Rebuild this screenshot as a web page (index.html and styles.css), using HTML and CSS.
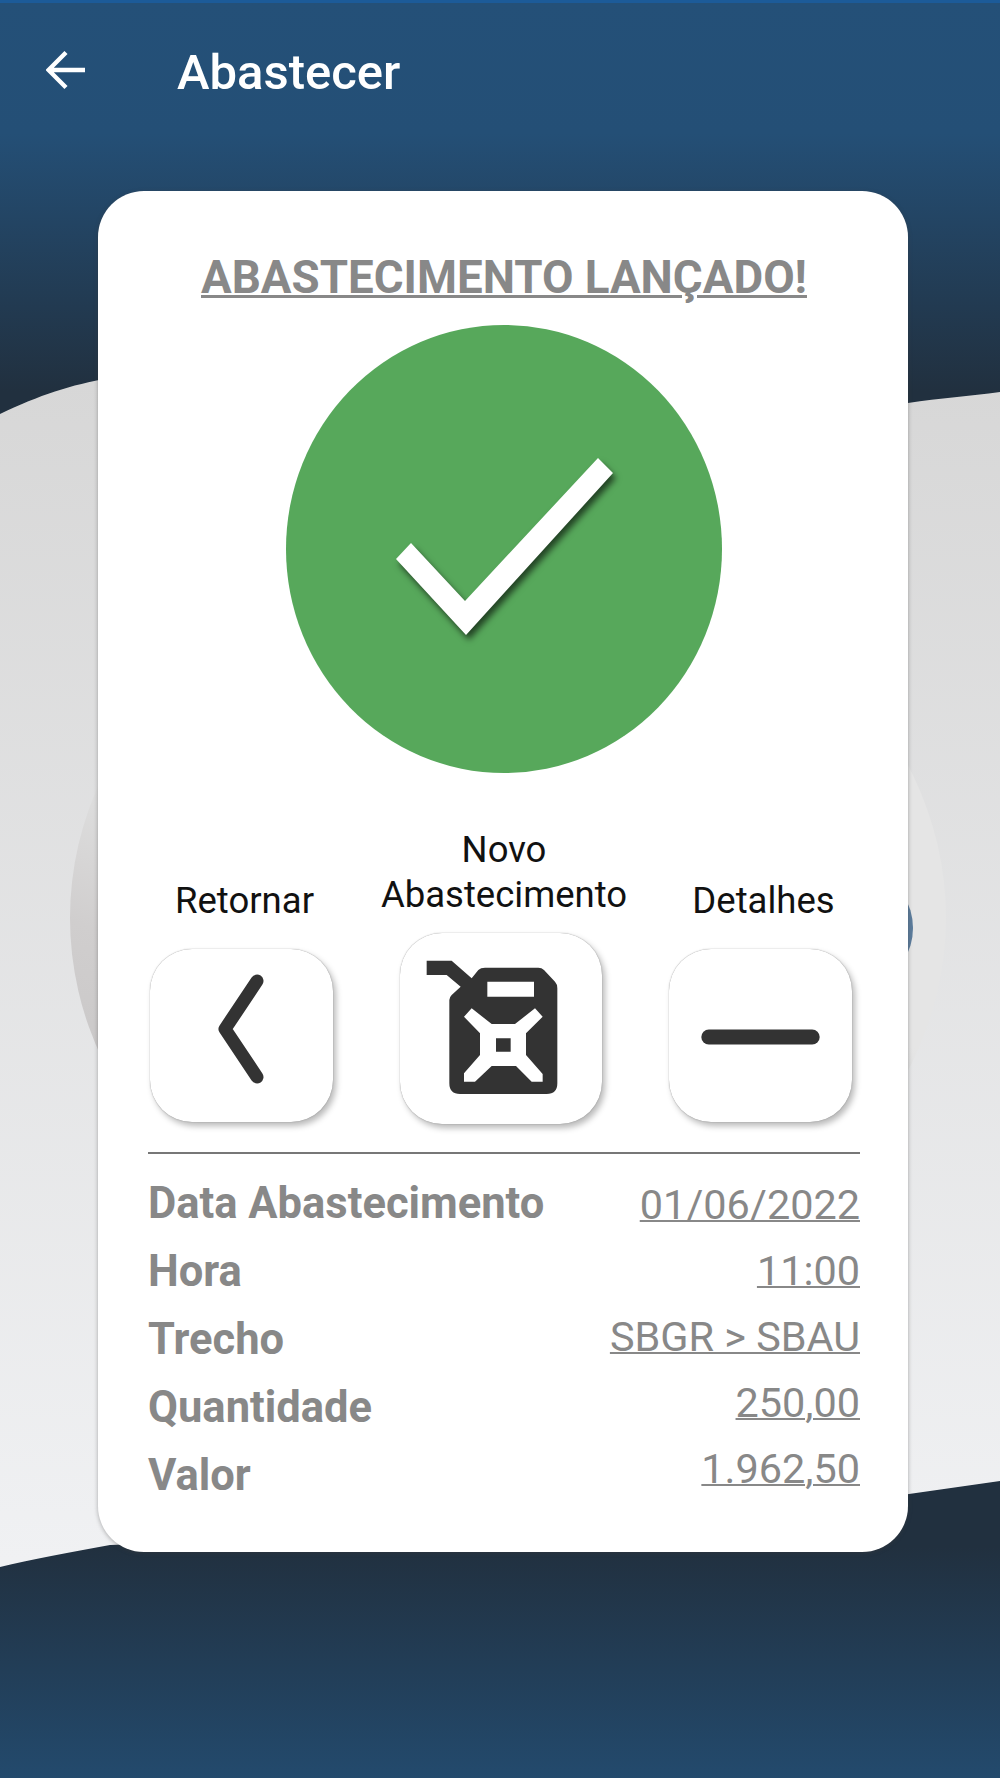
FILE: index.html
```html
<!DOCTYPE html>
<html lang="pt">
<head>
<meta charset="utf-8">
<title>Abastecer</title>
<link rel="stylesheet" href="styles.css">
</head>
<body>
<div class="screen">
  <svg class="backdrop" viewBox="0 0 1000 1778" preserveAspectRatio="none" aria-hidden="true">
    <defs>
      <linearGradient id="sky" x1="0" y1="0" x2="0" y2="1">
        <stop offset="0" stop-color="#245078"/>
        <stop offset="0.075" stop-color="#244f76"/>
        <stop offset="0.22" stop-color="#21303f"/>
        <stop offset="0.87" stop-color="#21303f"/>
        <stop offset="1" stop-color="#234a6d"/>
      </linearGradient>
      <linearGradient id="wave" x1="0" y1="380" x2="0" y2="1560" gradientUnits="userSpaceOnUse">
        <stop offset="0" stop-color="#d7d7d7"/>
        <stop offset="1" stop-color="#f0f1f3"/>
      </linearGradient>
      <linearGradient id="disc" x1="0" y1="0.9" x2="0.35" y2="0.1">
        <stop offset="0.25" stop-color="#cbc9c9"/>
        <stop offset="0.417" stop-color="#d0cece"/>
        <stop offset="0.6" stop-color="#dddddd"/>
        <stop offset="0.68" stop-color="#e5e5e5"/>
      </linearGradient>
    </defs>
    <rect width="1000" height="1778" fill="url(#sky)"/>
    <rect width="1000" height="3" fill="#1c5b99"/>
    <path d="M0 414 C40 395 70 385 110 378 L908 403 C940 398 970 396 1000 392 V1481 C900 1495 800 1510 700 1525 L110 1545 C70 1552 30 1560 0 1567 Z" fill="url(#wave)"/>
    <ellipse cx="508" cy="918" rx="438" ry="375" fill="url(#disc)"/>
    <ellipse cx="880" cy="928" rx="33" ry="46" fill="#5b7c9c"/>
  </svg>

  <header class="topbar">
    <svg class="back" viewBox="0 0 40 40" aria-hidden="true">
      <path d="M39 20H3M20 2.5 2.5 20 20 37.5" fill="none" stroke="#fff" stroke-width="4.4"/>
    </svg>
    <h1 class="page-title">Abastecer</h1>
  </header>

  <main class="card">
    <h2 class="card-title">ABASTECIMENTO LANÇADO!</h2>

    <svg class="success" viewBox="286 325 436 448" aria-hidden="true">
      <ellipse cx="504" cy="549" rx="218" ry="224" fill="#57a85b"/>
      <polygon class="tick" points="396,559 411,543 465,601 598,458 613,473 466,635" fill="#fff"/>
    </svg>

    <section class="actions">
      <div class="action action-side">
        <span class="action-label">Retornar</span>
        <div class="tile tile-side">
          <svg viewBox="150 949 183 173" aria-hidden="true">
            <path d="M257 981 225 1029 257 1077" fill="none" stroke="#333" stroke-width="13" stroke-linecap="round" stroke-linejoin="round"/>
          </svg>
        </div>
      </div>
      <div class="action action-main">
        <span class="action-label">Novo<br>Abastecimento</span>
        <div class="tile tile-main">
          <svg viewBox="30 39 606 573" aria-hidden="true">
            <path fill="#333" fill-rule="evenodd" d="M110 122H185L245 175 265 150Q272 143 285 143H445Q455 143 462 150L495 185Q502 192 502 205V490Q502 522 470 522H210Q178 522 178 490V240Q178 232 185 225L212 200 170 165H110ZM292 185V230H432V185ZM222 290 270 340V405L222 460V485H255L305 438H378L425 485H458V462L408 405V340L458 290 435 265 375 312H305L245 265ZM318 355H362V395H318Z"/>
          </svg>
        </div>
      </div>
      <div class="action action-side">
        <span class="action-label">Detalhes</span>
        <div class="tile tile-side">
          <svg viewBox="669 949 184 173" aria-hidden="true">
            <path d="M709 1037H813" fill="none" stroke="#333" stroke-width="15" stroke-linecap="round"/>
          </svg>
        </div>
      </div>
    </section>

    <hr class="rule">

    <section class="details">
      <ul class="detail-labels">
        <li>Data Abastecimento</li>
        <li>Hora</li>
        <li>Trecho</li>
        <li>Quantidade</li>
        <li>Valor</li>
      </ul>
      <ul class="detail-values">
        <li>01/06/2022</li>
        <li>11:00</li>
        <li>SBGR &gt; SBAU</li>
        <li>250,00</li>
        <li>1.962,50</li>
      </ul>
    </section>
  </main>
</div>
</body>
</html>
```
FILE: styles.css
```css
* { box-sizing: border-box; }
html, body { margin: 0; padding: 0; }
body { font-family: Roboto, "Liberation Sans", sans-serif; }

.screen {
  position: relative;
  width: 1000px;
  height: 1778px;
  overflow: hidden;
}
.backdrop {
  position: absolute;
  inset: 0;
  width: 100%;
  height: 100%;
}

.topbar {
  position: relative;
  height: 191px;
  display: flex;
  align-items: flex-start;
  padding: 50px 0 0 46px;
}
.back { width: 40px; height: 40px; flex: none; }
.page-title {
  margin: -5px 0 0 91px;
  font-size: 49px;
  line-height: 56px;
  font-weight: 500;
  color: #fff;
}

.card {
  position: relative;
  width: 810px;
  height: 1361px;
  margin-left: 98px;
  padding: 61px 48px 0 50px;
  background: #fff;
  border-radius: 46px;
  box-shadow: 0 1px 4px rgba(60, 60, 60, .4);
}
.card-title {
  margin: 0;
  text-align: center;
  font-size: 45.7px;
  line-height: 52px;
  font-weight: 700;
  color: #888;
  text-decoration: underline;
  text-decoration-thickness: 3px;
  white-space: nowrap;
}
.success {
  display: block;
  width: 436px;
  height: 448px;
  margin: 21px 0 0 138px;
}
.tick { filter: drop-shadow(3px 5px 3px rgba(0, 0, 0, .6)); }

.actions {
  display: flex;
  align-items: flex-end;
  gap: 67px;
  margin-top: 54px;
  padding-left: 2px;
}
.action {
  display: flex;
  flex-direction: column;
  align-items: center;
}
.action-side { width: 183px; padding-bottom: 2px; }
.action-main { width: 202px; }
.action-label {
  display: block;
  padding-left: 6px;
  font-size: 36.5px;
  line-height: 45px;
  color: #111;
  text-align: center;
  white-space: nowrap;
}
.tile {
  flex: none;
  background: #fff;
  border-radius: 42px;
  box-shadow: 0 0 1px rgba(80, 80, 80, .7), 3px 4px 6px rgba(0, 0, 0, .28);
}
.tile svg { display: block; width: 100%; height: 100%; }
.tile-side { width: 183px; height: 173px; margin-top: 26px; }
.tile-main { width: 202px; height: 191px; margin-top: 16px; }

.rule {
  height: 2px;
  margin: 28px 0 0;
  border: 0;
  background: #777;
}

.details {
  display: flex;
  justify-content: space-between;
  margin-top: 16px;
}
.detail-labels, .detail-values {
  margin: 0;
  padding: 0;
  list-style: none;
  color: #888;
}
.detail-labels {
  font-size: 43.5px;
  line-height: 68px;
  font-weight: 700;
}
.detail-values {
  padding-top: 2px;
  font-size: 41.4px;
  line-height: 66px;
  text-align: right;
  text-decoration: underline;
  text-decoration-thickness: 2px;
}
```
